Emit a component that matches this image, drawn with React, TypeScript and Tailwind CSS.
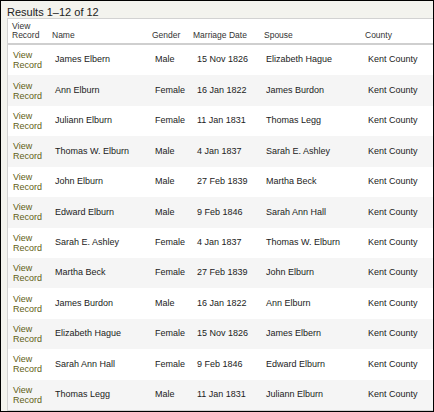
const rows = [
  ['James Elbern', 'Male', '15 Nov 1826', 'Elizabeth Hague'],
  ['Ann Elburn', 'Female', '16 Jan 1822', 'James Burdon'],
  ['Juliann Elburn', 'Female', '11 Jan 1831', 'Thomas Legg'],
  ['Thomas W. Elburn', 'Male', '4 Jan 1837', 'Sarah E. Ashley'],
  ['John Elburn', 'Male', '27 Feb 1839', 'Martha Beck'],
  ['Edward Elburn', 'Male', '9 Feb 1846', 'Sarah Ann Hall'],
  ['Sarah E. Ashley', 'Female', '4 Jan 1837', 'Thomas W. Elburn'],
  ['Martha Beck', 'Female', '27 Feb 1839', 'John Elburn'],
  ['James Burdon', 'Male', '16 Jan 1822', 'Ann Elburn'],
  ['Elizabeth Hague', 'Female', '15 Nov 1826', 'James Elbern'],
  ['Sarah Ann Hall', 'Female', '9 Feb 1846', 'Edward Elburn'],
  ['Thomas Legg', 'Male', '11 Jan 1831', 'Juliann Elburn'],
];

const cols = 'grid grid-cols-[41px_100px_40px_71px_101px_1fr]';

export default function App() {
  return (
    <div className="w-[434px] h-[412px] border border-black bg-[#f3f3ee] flex flex-col overflow-hidden" style={{ fontFamily: '"Liberation Sans", Arial, sans-serif' }}>
      <div className="h-[17px] pl-[6px] pt-[5px] text-[11px] leading-[13px] text-[#222]">Results 1–12 of 12</div>
      <div className="ml-[6px] flex-1 border-l border-t border-b border-[#d2d2d2] bg-white flex flex-col">
        <div className={`${cols} h-[26px] border-b-2 border-[#cfcfcf] text-[8.5px] leading-[9px] text-[#333]`}>
          <div className="pl-[4px] flex flex-col justify-end pb-[3px]">
            <span>View</span>
            <span>Record</span>
          </div>
          <div className="pl-[3px] flex items-end pb-[3px]">Name</div>
          <div className="pl-[3px] flex items-end pb-[3px]">Gender</div>
          <div className="pl-[4px] flex items-end pb-[3px]">Marriage Date</div>
          <div className="pl-[4px] flex items-end pb-[3px]">Spouse</div>
          <div className="pl-[4px] flex items-end pb-[3px]">County</div>
        </div>
        {rows.map((r, i) => (
          <div key={i} className={`${cols} flex-1 items-center text-[9px] text-[#222] ${i % 2 ? 'bg-[#f5f5f5]' : 'bg-white'}`}>
            <div className="pl-[5px] flex flex-col leading-[10px] text-[#5f5e14]">
              <span>View</span>
              <span>Record</span>
            </div>
            <div className="pl-[6px]">{r[0]}</div>
            <div className="pl-[6px]">{r[1]}</div>
            <div className="pl-[8px]">{r[2]}</div>
            <div className="pl-[6px]">{r[3]}</div>
            <div className="pl-[7px]">Kent County</div>
          </div>
        ))}
      </div>
    </div>
  );
}
